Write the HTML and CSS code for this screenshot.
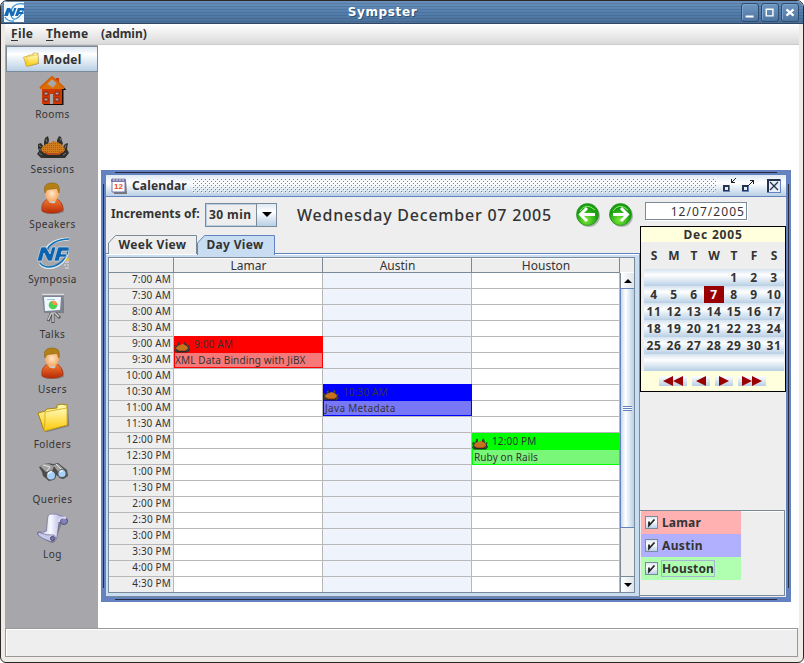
FILE: index.html
```html
<!DOCTYPE html>
<html lang="en">
<head>
<meta charset="utf-8">
<title>Sympster</title>
<link rel="stylesheet" href="styles.css">
</head>
<body>
<svg class="defs" aria-hidden="true">
  <defs>
    <linearGradient id="gold" x1="0" y1="0" x2="0" y2="1"><stop offset="0" stop-color="#fffbb8"/><stop offset="1" stop-color="#fcc908"/></linearGradient>
    <linearGradient id="coat" x1="0" y1="0" x2="0" y2="1"><stop offset="0" stop-color="#f47a30"/><stop offset="1" stop-color="#b82a08"/></linearGradient>
    <radialGradient id="face"><stop offset="0" stop-color="#ffe6c8"/><stop offset="1" stop-color="#f5a860"/></radialGradient>
    <linearGradient id="paper" x1="0" y1="0" x2="1" y2="0"><stop offset="0" stop-color="#bcbce8"/><stop offset=".5" stop-color="#f8f8ff"/><stop offset="1" stop-color="#a4a4d8"/></linearGradient>
    <radialGradient id="green" cx=".45" cy=".75"><stop offset="0" stop-color="#7cea38"/><stop offset="1" stop-color="#18a010"/></radialGradient>
    <pattern id="weave" width="2" height="2" patternUnits="userSpaceOnUse"><rect width="2" height="2" fill="#d07c20"/><rect width="1" height="1" fill="#a85818"/></pattern>
    <symbol id="crab" viewBox="0 0 32 24">
      <path d="M7 7l1-4 3-2 1 4-1 5-4 1zM20 5l2-4 2 1 2 7-3 3-3-3zM1 9l3-1 3 4-1 4 5 5v2H4l-4-4 2-3-1-3zM31 8l-3 1-3 4 2 4-6 4v2h7l4-5-2-4z" fill="#30302e"/>
      <path d="M9 12L5 18l6 5h10l6-5-4-7z" fill="#2a2a28"/>
      <path d="M9 4l1 3M23 3l1 3M2 10l2 2M29 10l-1 3M2 18l3 2M26 20l3-2M2 14l2 1" stroke="#74746c" fill="none"/>
      <path d="M5 12l4-3 4-1 3-2 4 1 4 2 3 3 1 3-3 3-4 2H12l-5-2-3-3z" fill="url(#weave)"/>
      <path d="M6 16l6 2h9l6-2-5 4H11z" fill="#b44c18"/>
    </symbol>
    <symbol id="person" viewBox="0 0 26 32">
      <path d="M5 21l5-4 8 1 5 5 1 7-6 2H7l-4-2z" fill="#555" opacity=".4"/>
      <path d="M2 29c-1-7 2-11 7-12h7c4 1 7 5 7 11-4 4-17 4-21 1z" fill="url(#coat)" stroke="#a73716" stroke-width=".8"/>
      <path d="M8 17q4 4 8 0l-1 4q-3 1-6-1z" fill="#c9cccc"/>
      <ellipse cx="12" cy="11.500" rx="7" ry="8" fill="url(#face)"/>
      <path d="M5 11C3 4 6 1 12 1c7 0 8 4 7 10l-2-5c-5 2-9 0-11 3z" fill="#b28014" stroke="#8a6514" stroke-width=".6"/>
    </symbol>
    <symbol id="nf" viewBox="0 0 32 32">
      <path d="M32 2C19 2 10 8 9 14M3 26c5 9 24 5 28-12" fill="none" stroke="#e0ecf4" stroke-width="3"/>
      <path d="M32 2C20 2 11 8 10 14M3 26c6 8 23 4 28-12" fill="none" stroke="#1470b4" stroke-width="1.700"/>
      <path d="M0 24L4 10h5l4 7 2-7h4l-4 14h-4l-4-8-2 8z" fill="#0b62ae" stroke="#e4eef5" stroke-width=".6"/>
      <path d="M17 24l4-14h11v4h-7l-1 3h6l-1 3h-6l-1 4z" fill="#0b62ae" stroke="#e4eef5" stroke-width=".6"/>
      <path d="M28 25h4M27 28h2M30 28h2M28 31h4" stroke="#dce6ec" stroke-width="1"/><path d="M29 22.500h3" stroke="#f4c430" stroke-width="2"/>
    </symbol>
    <symbol id="folder" viewBox="0 0 32 29">
      <path d="M7 29l24-7V3l1 20-22 6z" fill="#555" opacity=".6"/>
      <path d="M1 10l7-2 2-2 10-1V2l6-1 1 1 3-.5V22L7 28z" fill="url(#gold)" stroke="#a98309"/>
      <path d="M8 9l22-4v17L7 28l1-10z" fill="url(#gold)" stroke="#d0a618" stroke-width=".8"/>
    </symbol>
  </defs>
</svg>

<div class="window">
  <header class="titlebar">
    <svg class="app-icon" viewBox="0 0 20 20"><rect width="20" height="20" fill="#f4f9fb"/><path d="M20 2C11 0 6 6 7 13s8 5 13-6M1 15q3 5 9 4" fill="none" stroke="#3c94d0" stroke-width="1.300"/><path d="M0 14L3 6h3l3 4 1-4h2.500l-3 8H7L5 10l-1 4z" fill="#156ab8"/><path d="M11 14l3-8h6v2.500h-4l-.5 1.500h4v2h-4.500l-1 2z" fill="#156ab8"/></svg>
    <h1>Sympster</h1>
    <div class="window-buttons">
      <svg viewBox="0 0 18 19"><path d="M4 13h9v2H4z" fill="#fff"/></svg>
      <svg viewBox="0 0 18 19"><path d="M4.800 5.800h7.500v7.500H4.800z" fill="none" stroke="#fff" stroke-width="1.600"/></svg>
      <svg viewBox="0 0 18 19"><path d="M5 6l8 7M13 6l-8 7" stroke="#fff" stroke-width="2.500"/></svg>
    </div>
  </header>
  <nav class="menubar"><span class="m1"><u>F</u>ile</span><span class="m2"><u>T</u>heme</span><span class="m3">(admin)</span></nav>

  <main class="workspace">
    <aside class="sidebar">
      <div class="model"><svg viewBox="0 0 32 29"><use href="#folder"/></svg><span>Model</span></div>
      <div class="item low"><svg viewBox="0 0 32 32"><path d="M5 13v16h20V14h3L16 2 3 14z" fill="#161008" transform="translate(1.5 1)"/><path d="M19 3h3v9h-3z" fill="#d83500"/><path d="M15 1L3 12v2h24v-2z" fill="#dc6e0a"/><path d="M15 4l5 4-4 5-6-4z" fill="#a7a6ab" stroke="#e17c12"/><path d="M5 14h20v15H5z" fill="#cf3705"/><path d="M7 17h4v3H7zm0 6h4v3H7zm11-6h4v3h-4zm0 6h4v3h-4z" fill="#a7a6ab" stroke="#862205"/><path d="M13 19h3v10h-3z" fill="#a7a6ab"/><path d="M3 13L15 2l12 11" fill="none" stroke="#cf6308" stroke-width="2"/></svg><span>Rooms</span></div>
      <div class="item low"><svg class="crab" viewBox="0 0 32 24"><use href="#crab"/></svg><span>Sessions</span></div>
      <div class="item"><svg viewBox="-3 0 32 32"><use href="#person" width="26" height="32"/></svg><span>Speakers</span></div>
      <div class="item"><svg viewBox="0 0 32 32"><use href="#nf"/></svg><span>Symposia</span></div>
      <div class="item"><svg viewBox="0 0 32 32"><path d="M7 6l20 1v14H8z" fill="#555" opacity=".5"/><path d="M15 20l-4 9M16 20v11M17 20l6 6" stroke="#505050" stroke-width="3"/><path d="M15 20l-4 8M16 20v10M17 20l5 5" stroke="#ccc" stroke-width="1.500"/><path d="M5 3h22l-2 17-18 1z" fill="#7d8494"/><path d="M7 5h17l-1 13-15 1z" fill="#eff8fd"/><path d="M10 7.500h8" stroke="#abc2dc"/><path d="M5 2.500h22" stroke="#dcdcdc" stroke-width="1.500"/><circle cx="16" cy="13" r="4.300" fill="#4cd050"/><path d="M16 13l-1-4a5 5 0 016 4z" fill="#ff934f"/></svg><span>Talks</span></div>
      <div class="item"><svg viewBox="-3 0 32 32"><use href="#person" width="26" height="32"/></svg><span>Users</span></div>
      <div class="item"><svg viewBox="0 -1 32 32"><use href="#folder" width="32" height="29"/></svg><span>Folders</span></div>
      <div class="item"><svg viewBox="0 0 32 32"><path d="M2 10l7-4 8 1 4-1 9 7 1 6-5 3-7-4-1 4-6 2-6-5-1-4z" fill="#4c4c4c"/><path d="M3 9l6-3 8 3-2 5-6 1zM16 8l5-1 8 7-6 3z" fill="#a0a0a0"/><path d="M6 8l7 2-3 4M19 7l5 5" stroke="#e4e4e4" fill="none"/><circle cx="14" cy="18.500" r="5" fill="#555"/><circle cx="25.500" cy="17" r="4.800" fill="#555"/><circle cx="14" cy="18.500" r="4" fill="#a7d0fa"/><circle cx="25" cy="16.500" r="3.600" fill="#a7d0fa"/><path d="M11 17q2-3 4-2M23 15q2-2 3-1" stroke="#eef8ff" fill="none" stroke-width="1.500"/></svg><span>Queries</span></div>
      <div class="item"><svg viewBox="0 0 32 32"><path d="M12 12l15-6-7 18q-1 7-5 7L8 28z" fill="#555" opacity=".5"/><path d="M13 2q6-1 14 3-4 0-5 5l-2 15q-1 5-6 4L9 26q-4 0-8-3l-.5-3q6 1 9-1l1-12q0-4 2.500-5z" fill="url(#paper)" stroke="#68689e" stroke-width=".7"/><ellipse cx="27" cy="9" rx="3.500" ry="3.500" fill="#8383bb" stroke="#50507c"/><path d="M22 10q0-6 7-4" fill="none" stroke="#ddddf5" stroke-width="2"/><path d="M1 20q9 4 16 3l2 3q-3 5-7 3-7-2-11-6z" fill="#c7c7ea" stroke="#61618d" stroke-width=".7"/><circle cx="15.500" cy="26.500" r="2" fill="#7777a8" stroke="#444470"/></svg><span>Log</span></div>
    </aside>

    <section class="desktop">
      <article class="frame">
        <header class="frame-title">
          <svg class="cal-icon" viewBox="0 0 16 16"><path d="M2 2h13l1 14H3z" fill="#777"/><path d="M1 1h13v13H1z" fill="#fff" stroke="#7776a4"/><path d="M0 1h15v3H0z" fill="#7c7ab0"/><path d="M3 0v3M6 0v3M9 0v3M12 0v3" stroke="#ddd"/><text x="3" y="11">12</text></svg>
          <h2>Calendar</h2>
          <svg class="bumps" width="524" height="15" shape-rendering="crispEdges"><defs><pattern id="dots" width="4" height="4" patternUnits="userSpaceOnUse"><path d="M1 1h1v1H1zM3 3h1v1H3z" fill="#6382bf"/><path d="M2 2h1v1H2zM0 0h1v1H0z" fill="#fff"/></pattern></defs><rect width="524" height="15" fill="url(#dots)"/></svg>
          <svg class="frame-buttons" viewBox="0 0 60 18" shape-rendering="crispEdges"><path d="M1 9h7v7H1z" fill="#6382bf"/><path d="M1 9h6v6H1z" fill="#26334b"/><path d="M3 11h3v3H3z" fill="#e7f0f8"/><path d="M13 2h1v1h-1zM12 3h1v1h-1zM11 4h1v1h-1zM10 5h1v1h-1zM9 3h1v4H9zM9 6h4v1H9z" fill="#222"/><path d="M20 9h7v7h-7z" fill="#6382bf"/><path d="M20 9h6v6h-6z" fill="#26334b"/><path d="M22 11h3v3h-3z" fill="#e7f0f8"/><path d="M25 10h1v1h-1zM26 9h1v1h-1zM27 8h1v1h-1zM28 7h1v1h-1zM29 6h1v1h-1zM30 5h1v1h-1zM31 4h1v4h-1zM28 4h4v1h-4z" fill="#222"/><path d="M45 3h14v14H45z" fill="#6382bf"/><path d="M45 3h13v13H45z" fill="#26334b"/><path d="M46.500 4.500h11v11h-11z" fill="#e7f0f8"/><path d="M48 6l8 8M56 6l-8 8" stroke="#26334b" stroke-width="1.300" shape-rendering="auto"/></svg>
        </header>
        <div class="frame-body">
          <div class="left">
            <div class="toolbar">
              <span class="inc">Increments of:</span>
              <div class="combo"><span>30 min</span><b><svg viewBox="0 0 10 5"><path d="M0 0h10L5 5z"/></svg></b></div>
              <span class="date">Wednesday December 07 2005</span>
              <svg class="go" viewBox="0 0 24 24"><circle cx="13" cy="13" r="11" fill="#777" opacity=".5"/><circle cx="11.500" cy="11.500" r="11" fill="url(#green)" stroke="#168512" stroke-width=".6"/><path d="M4 8Q10-1 19 7" stroke="#9ae37c" fill="none"/><path d="M11 5l-6.500 6.500L11 18M5 11.500h14" fill="none" stroke="#fff" stroke-width="3"/></svg>
              <svg class="go next" viewBox="0 0 24 24"><circle cx="13" cy="13" r="11" fill="#777" opacity=".5"/><circle cx="11.500" cy="11.500" r="11" fill="url(#green)" stroke="#168512" stroke-width=".6"/><path d="M4 8Q10-1 19 7" stroke="#9ae37c" fill="none"/><path d="M12 5l6.500 6.500L12 18M18 11.500H4" fill="none" stroke="#fff" stroke-width="3"/></svg>
            </div>
            <div class="tabs">
              <div class="tab"><svg viewBox="0 0 89 19"><path d="M.5 19V8l7-7.500h81V19" fill="#eee" stroke="#7a8a99"/></svg><span>Week View</span></div>
              <div class="tab day"><svg viewBox="0 0 78 20"><path d="M.5 20V8l7-7.500h70V20" fill="#c8ddf2" stroke="#6382bf"/></svg><span>Day View</span></div>
            </div>
            <div class="table-pane">
              <div class="table">
                <div class="head"><span></span><span>Lamar</span><span>Austin</span><span>Houston</span></div>
                <div class="rows">
                  <div class="times"><span>7:00 AM</span><span>7:30 AM</span><span>8:00 AM</span><span>8:30 AM</span><span>9:00 AM</span><span>9:30 AM</span><span>10:00 AM</span><span>10:30 AM</span><span>11:00 AM</span><span>11:30 AM</span><span>12:00 PM</span><span>12:30 PM</span><span>1:00 PM</span><span>1:30 PM</span><span>2:00 PM</span><span>2:30 PM</span><span>3:00 PM</span><span>3:30 PM</span><span>4:00 PM</span><span>4:30 PM</span></div>
                  <div class="room"><div class="event red"><div class="when"><svg viewBox="0 0 32 24"><use href="#crab"/></svg><span>9:00 AM</span></div><div class="what">XML Data Binding with JiBX</div></div></div>
                  <div class="room tint"><div class="event blue"><div class="when"><svg viewBox="0 0 32 24"><use href="#crab"/></svg><span>10:30 AM</span></div><div class="what java">Java Metadata</div></div></div>
                  <div class="room"><div class="event green"><div class="when"><svg viewBox="0 0 32 24"><use href="#crab"/></svg><span>12:00 PM</span></div><div class="what">Ruby on Rails</div></div></div>
                </div>
              </div>
              <div class="scroll"><div class="corner"></div><div class="arrow"><svg viewBox="0 0 8 4"><path d="M0 4h8L4 0z"/></svg></div><div class="track"><div class="thumb"><i></i></div></div><div class="arrow"><svg viewBox="0 0 8 4"><path d="M0 0h8L4 4z"/></svg></div></div>
            </div>
          </div>
          <div class="right">
            <div class="field">12/07/2005</div>
            <div class="month">
              <div class="month-name">Dec 2005</div>
              <div class="dow"><span>S</span><span>M</span><span>T</span><span>W</span><span>T</span><span>F</span><span>S</span></div>
              <div class="days"><span></span><span></span><span></span><span></span><span>1</span><span>2</span><span>3</span><span>4</span><span>5</span><span>6</span><span class="sel">7</span><span>8</span><span>9</span><span>10</span><span>11</span><span>12</span><span>13</span><span>14</span><span>15</span><span>16</span><span>17</span><span>18</span><span>19</span><span>20</span><span>21</span><span>22</span><span>23</span><span>24</span><span>25</span><span>26</span><span>27</span><span>28</span><span>29</span><span>30</span><span>31</span><span></span><span></span><span></span><span></span><span></span><span></span><span></span></div>
              <div class="pager">
                <svg class="wide" viewBox="0 0 28 10"><path d="M14 0v10L4 5zM24 0v10L14 5z"/></svg>
                <svg viewBox="0 0 18 10"><path d="M14 0v10L4 5z"/></svg>
                <svg viewBox="0 0 18 10"><path d="M4 0v10l10-5z"/></svg>
                <svg class="wide" viewBox="0 0 28 10"><path d="M4 0v10l10-5zM14 0v10l10-5z"/></svg>
              </div>
            </div>
            <div class="legend">
              <label class="l-red"><svg viewBox="0 0 11 11"><path d="M3 4.500v4l5.500-6" fill="none" stroke="#222" stroke-width="1.800"/></svg><span>Lamar</span></label>
              <label class="l-blue"><svg viewBox="0 0 11 11"><path d="M3 4.500v4l5.500-6" fill="none" stroke="#222" stroke-width="1.800"/></svg><span class="aus">Austin</span></label>
              <label class="l-green"><svg viewBox="0 0 11 11"><path d="M3 4.500v4l5.500-6" fill="none" stroke="#222" stroke-width="1.800"/></svg><span class="focus">Houston</span></label>
            </div>
          </div>
        </div>
      </article>
    </section>
  </main>
  <footer class="status"></footer>
</div>
</body>
</html>
```
FILE: styles.css
```css
* { box-sizing: border-box; }
body { margin: 0; background: #fff; font: 700 12px/16px "Noto Sans", "Liberation Sans", sans-serif; color: #333; }
h1, h2 { margin: 0; font-size: inherit; }
svg { display: block; flex: none; }
span, text { white-space: nowrap; }
.defs { position: absolute; width: 0; height: 0; }
.window { width: 804px; height: 663px; overflow: hidden; display: flex; flex-direction: column; border: 1px solid #2c2828; border-radius: 7px 7px 6px 6px; background: #efebe7; }
.titlebar { flex: none; height: 23px; display: flex; align-items: center; border-bottom: 1px solid #304664; background: repeating-linear-gradient(transparent 0 2px, rgba(30,60,100,.19) 2px 3px), linear-gradient(#6990b9, #557fad 50%, #4b7099); color: #fff; padding: 0 4px 0 3px; }
.app-icon { width: 20px; height: 20px; }
.titlebar h1 { flex: 1; text-align: center; font: 700 12px/21px "DejaVu Sans", sans-serif; letter-spacing: .65px; padding-left: 0; text-shadow: 1px 1px #315274; }
.window-buttons { display: flex; gap: 2px; }
.window-buttons svg { width: 18px; height: 19px; border: 1px solid #2e4b70; border-radius: 3px; background: linear-gradient(#6e98c3, #4d749e); box-shadow: inset 1px 1px #7ba2ca; }
.menubar { flex: none; height: 21px; margin: 0 4px; display: flex; padding-left: 6px; line-height: 19px; background: linear-gradient(#fff, #dadada); border-bottom: 1px solid #ccc; box-shadow: 0 1px #fff; }
.menubar span { letter-spacing: .35px; }
.menubar .m3 { letter-spacing: -.05px; }
.m1 { width: 35px; } .m2 { width: 55px; }
.menubar u { text-underline-offset: 2px; }
.workspace { flex: none; height: 583px; margin: 0 4px; background: #fff; display: flex; }
.sidebar { width: 93px; height: 583px; background: #a7a6ab; padding-top: 1px; flex: none; color: #333; }
.model { height: 26px; margin: 0 0 0 1px; border: 1px solid #7a8a99; background: linear-gradient(#dde8f3, #fff 30%, #b8cfe5); display: flex; align-items: center; gap: 4px; padding-left: 16px; letter-spacing: .3px; line-height: 24px; }
.model span { padding-top: 1px; }
.model svg { width: 16px; height: 15px; }
.item { height: 55px; display: flex; flex-direction: column; align-items: center; padding: 0 0 0 1px; font: 400 10px/14px "Noto Sans", sans-serif; letter-spacing: .45px; }
.item.low { padding-top: 3px; }
.item span { padding-left: 1px; }
.item svg { width: 32px; height: 32px; margin: 0 0 3px 1px; }
.item.low svg { margin-bottom: 0; }
.item.low .crab { height: 24px; margin: 5px 0 3px 1px; }
.desktop { flex: 1; padding: 125px 0 0 3px; }
.frame { width: 690px; height: 432px; padding: 5px; background: linear-gradient(#272c3d, #272c3d) 14px 2px / 662px 1px no-repeat, linear-gradient(#272c3d, #272c3d) 14px 429px / 662px 1px no-repeat, linear-gradient(#272c3d, #272c3d) 2px 14px / 1px 404px no-repeat, linear-gradient(#272c3d, #272c3d) 687px 14px / 1px 404px no-repeat, #6382bf; }
.frame-title { height: 22px; display: flex; align-items: center; padding-left: 5px; border-bottom: 1px solid #6382bf; background: linear-gradient(#dde8f3, #fff 38%, #b8cfe5); }
.cal-icon { width: 16px; height: 16px; }
.cal-icon text { font: 700 8px "Liberation Sans", sans-serif; fill: #e84818; }
.frame-title h2 { width: 60px; margin-left: 5px; letter-spacing: .15px; }
.bumps { width: 524px; height: 15px; }
.frame-buttons { width: 60px; height: 18px; margin: 0 0 2px 6px; }
.frame-body { height: 400px; background: #eee; display: flex; }
.left { width: 534px; flex: none; }
.toolbar { height: 38px; display: flex; align-items: center; padding: 0 0 3px 5px; }
.inc { width: 94px; letter-spacing: .09px; line-height: 14px; padding-bottom: 2px; }
.combo { width: 72px; height: 24px; display: flex; justify-content: space-between; border: 1px solid #7a8a99; background: #eee; line-height: 22px; padding-left: 3px; box-shadow: inset 0 0 0 1px #b8cfe5; }
.combo span { letter-spacing: .4px; }
.combo b { width: 20px; border-left: 1px solid #7a8a99; background: linear-gradient(#dde8f3, #fff 35%, #b8cfe5); display: grid; place-items: center; }
.combo svg { width: 10px; height: 5px; }
.date { width: 279px; margin-left: 20px; font: 500 16px/24px "Noto Sans", sans-serif; letter-spacing: .78px; }
.go { width: 24px; height: 24px; }
.next { margin-left: 9px; }
.tabs { height: 19px; display: flex; padding-left: 2px; border-bottom: 1px solid #6382bf; }
.tab { width: 89px; height: 18px; display: grid; letter-spacing: .33px; line-height: 20px; }
.tab svg, .tab span { grid-area: 1 / 1; }
.tab svg { width: 89px; height: 19px; }
.tab span { text-align: center; }
.tab.day { width: 78px; height: 20px; }
.tab.day span { padding-right: 2px; }
.tab.day svg { width: 78px; height: 20px; }
.table-pane { height: 343px; padding: 3px 4px 4px 2px; background: #c8ddf2; border-right: 1px solid #7a8a99; border-bottom: 1px solid #7a8a99; box-shadow: inset 0 1px #fff; display: flex; }
.table { width: 512px; height: 336px; border: 1px solid #7a8a99; border-right: 0; background: #fff; }
.head { height: 15px; display: grid; grid-template-columns: 65px 149px 149px 148px; border-bottom: 1px solid #7a8a99; font: 400 12px/15px "Noto Sans", sans-serif; background: #eee; box-shadow: inset 1px 1px #fff; }
.head span { border-right: 1px solid #7a8a99; text-align: center; padding-left: 1px; }
.rows { display: grid; grid-template-columns: 65px 149px 149px 148px; height: 319px; font: 400 10px/15px "Noto Sans", sans-serif; }
.times { background: #eee; border-right: 1px solid #b8b8b8; height: 319px; overflow: hidden; }
.times span { display: block; height: 16px; border-bottom: 1px solid #b8b8b8; text-align: right; padding-right: 2px; line-height: 13px; letter-spacing: .17px; }
.room { height: 319px; border-right: 1px solid #b8b8b8; background: repeating-linear-gradient(transparent 0 15px, #b8b8b8 15px 16px); }
.tint { background-color: #eff3fc; }
.event { width: 149px; height: 32px; border: 1px solid; }
.when { height: 16px; display: flex; gap: 4px; align-items: center; letter-spacing: .15px; }
.when span { padding-bottom: 2px; }
.when svg { width: 16px; height: 12px; margin: 4px 0 0 -1px; }
.what { height: 14px; line-height: 15px; padding-left: 1px; letter-spacing: .1px; color: #333; }
.java { letter-spacing: .32px; }
.red .what { padding-left: 0; letter-spacing: .14px; }
.red { margin-top: 63px; border-color: #f00; } .red .when { background: #f00; } .red .what { background: #f77878; }
.blue { margin-top: 111px; border-color: #00f; } .blue .when { background: #00f; } .blue .what { background: #7878f7; }
.green { margin-top: 160px; border-color: #0f0; width: 148px; } .green .when { background: #0f0; } .green .what { background: #78f778; }
.scroll { width: 16px; height: 336px; border: 1px solid #7a8a99; border-left: 0; display: flex; flex-direction: column; background: #eee; }
.corner { height: 15px; border-bottom: 1px solid #fff; }
.arrow { flex: none; height: 15px; background: linear-gradient(90deg, #fff, #e0e5ea); display: grid; place-items: center; border-left: 1px solid #7a8a99; }
.arrow svg { width: 8px; height: 4px; }
.track { flex: 1; border: 1px solid #7a8a99; border-right: 0; }
.thumb { height: 240px; border: 1px solid #6382bf; border-right: 0; margin: -1px 0 0 -1px; background: linear-gradient(90deg, #c8d9ea, #fff 35%, #b8cfe5); display: grid; place-items: center; }
.thumb i { width: 9px; height: 5px; background: repeating-linear-gradient(#6382bf 0 1px, #fff 1px 2px); }
.right { flex: 1; height: 400px; display: flex; flex-direction: column; }
.field { width: 102px; height: 18px; margin: 5px 0 0 5px; background: #fff; border: 1px solid #7a8a99; text-align: right; padding-right: 1px; font: 400 12px/17px "Noto Sans", sans-serif; letter-spacing: 1.05px; box-shadow: 1px 1px #fff; }
.month { height: 166px; margin-top: 6px; border: 1px solid #000; background: #ffffde; text-align: center; }
.month-name { height: 15px; line-height: 15px; letter-spacing: .8px; }
.dow, .days { display: grid; grid-template-columns: repeat(7, 20px); }
.dow { height: 27px; padding-left: 3px; line-height: 28px; background: #eee; }
.days { margin-left: 0; padding-left: 3px; padding-right: 1px; background: #eee; height: 102px; grid-auto-rows: 17px; line-height: 17px; letter-spacing: .6px; }
.days span { background: linear-gradient(#d4e2ef, #fff 35%, #b8cfe5); }
.days .sel { background: #900; color: #fff; }
.pager { height: 20px; display: flex; justify-content: center; align-items: center; gap: 5px; padding-right: 1px; }
.pager svg { width: 18px; height: 10px; background: linear-gradient(#fff, #b8cfe5); fill: #900; }
.pager .wide { width: 28px; }
.legend { height: 86px; margin: 118px 1px 0 0; border: 1px solid #7a8a99; border-left: 0; padding-left: 1px; box-shadow: inset 0 1px #fff; }
.legend label { width: 100px; height: 23px; display: flex; align-items: center; padding-left: 4px; gap: 3px; }
.legend label svg { width: 13px; height: 13px; border: 1px solid #7a8a99; background: linear-gradient(#dde8f3, #fff 40%, #b8cfe5); }
.legend span { border: 1px solid transparent; letter-spacing: .15px; line-height: 15px; }
.legend .aus { letter-spacing: .35px; }
.legend .focus { border-color: #a3b8cc; }
.l-red { background: #ffb0b0; } .l-blue { background: #b0b0ff; } .l-green { background: #b0ffb0; }
.status { flex: none; height: 29px; margin: 0 5px 0 4px; background: #eee; border: 1px solid #999; box-shadow: inset 1px 1px #fff; }
```
